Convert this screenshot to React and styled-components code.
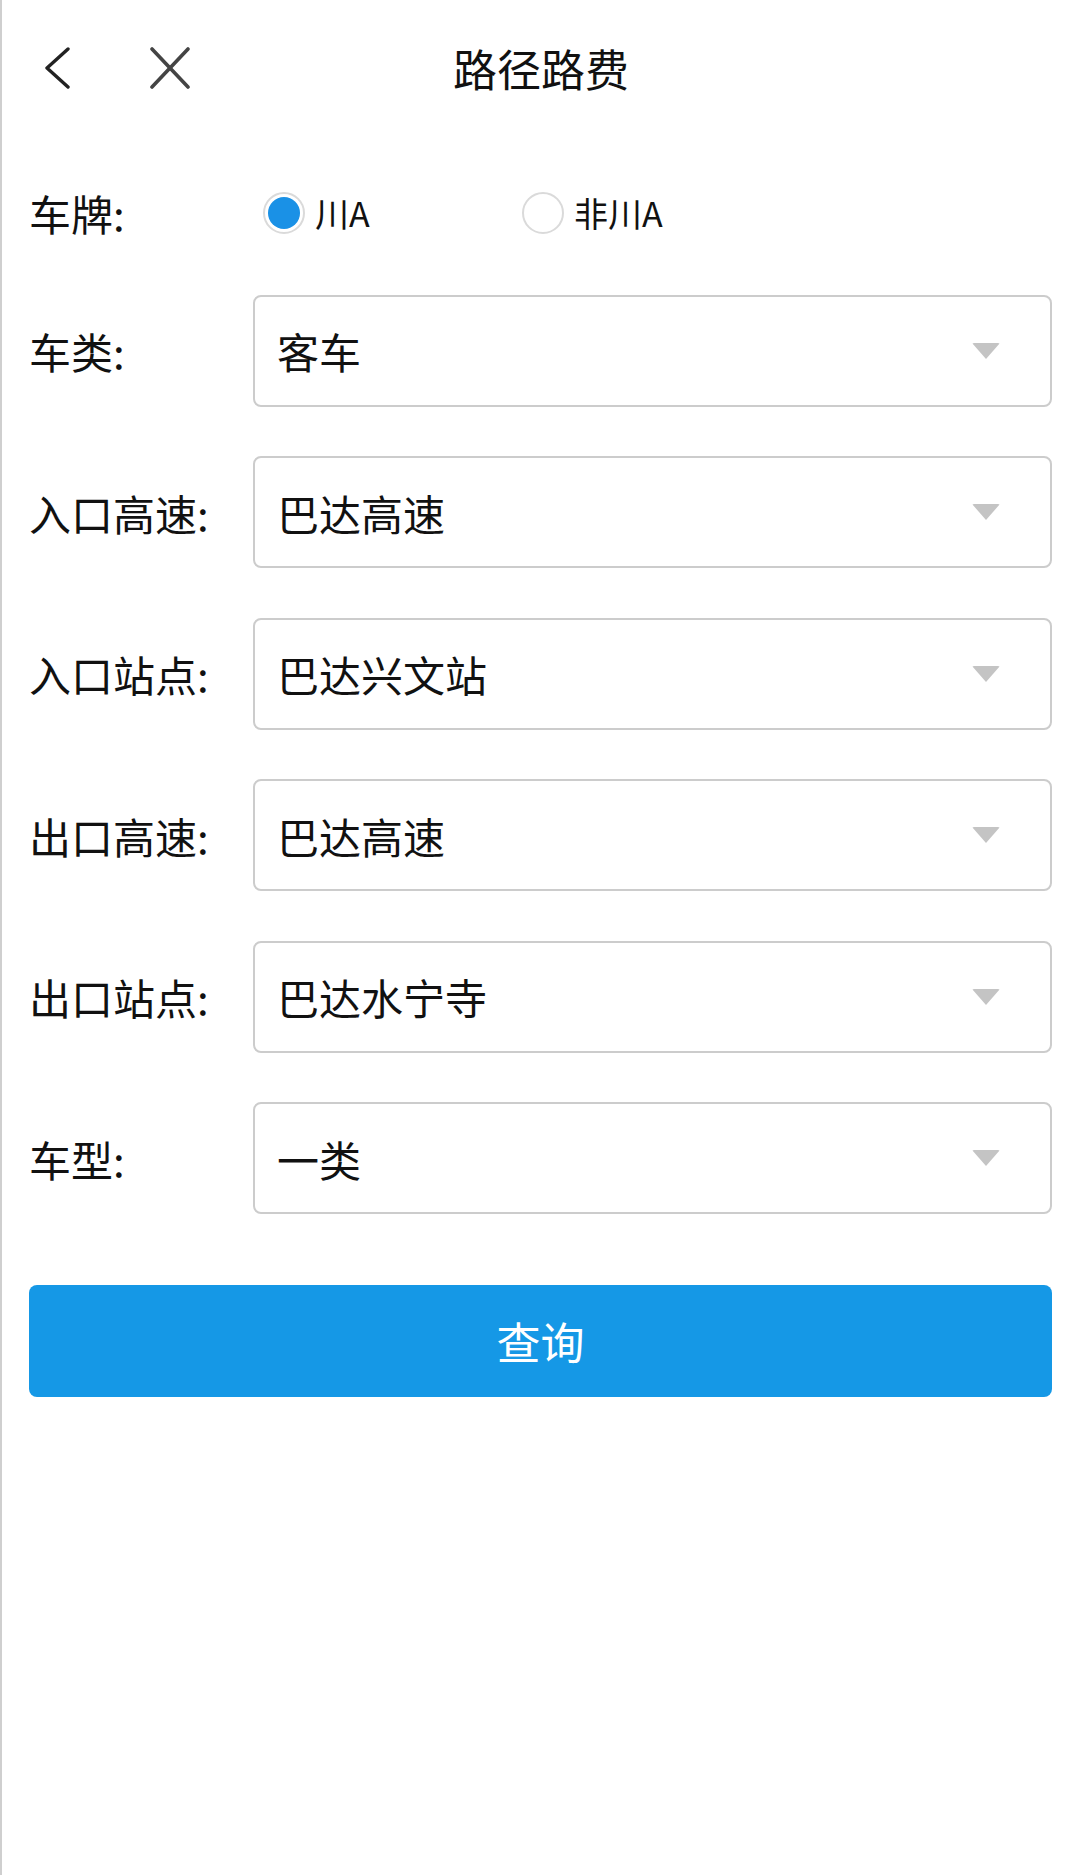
import styled, { createGlobalStyle } from "styled-components"

const GlobalStyle = createGlobalStyle`
    html, body {
        margin: 0;
        padding: 0;
        background: #ffffff;
    }
    body {
        font-family: "Noto Sans CJK SC", "Noto Sans", sans-serif;
        color: #111111;
    }
`

const Page = styled.div`
    min-height: 1875px;
    box-sizing: border-box;
    border-left: 2px solid #cfcfcf;
    background: #ffffff;
`

const Header = styled.div`
    display: grid;
    grid-template-columns: 1fr auto 1fr;
    align-items: center;
    height: 136px;
`

const HeaderIcons = styled.div`
    display: flex;
    align-items: center;
    gap: 78px;
    padding-left: 41px;
`

const IconButton = styled.button`
    display: flex;
    align-items: center;
    justify-content: center;
    padding: 0;
    border: none;
    background: none;
`

const Title = styled.h1`
    margin: 0;
    font-size: 44px;
    font-weight: 400;
    color: #111111;
`

const Form = styled.div`
    display: flex;
    flex-direction: column;
    gap: 49.5px;
    padding: 46px 28px 0 27px;
`

const Row = styled.div`
    display: grid;
    grid-template-columns: 224px 1fr;
    align-items: center;
    height: ${(p) => p.height || 112}px;
    margin-bottom: ${(p) => p.shift || 0}px;
`

const Label = styled.div`
    font-size: 42px;
    color: #111111;
    white-space: nowrap;
`

const RadioGroup = styled.div`
    display: flex;
    align-items: center;
    padding-left: 10px;
`

const RadioOption = styled.label`
    display: flex;
    align-items: center;
    gap: 10px;
    width: ${(p) => p.width || "auto"};
    font-size: 34px;
    color: #111111;
`

const RadioDot = styled.span`
    width: 42px;
    height: 42px;
    box-sizing: border-box;
    border-radius: 50%;
    border: 2px solid #dadada;
    padding: 3px;
    background: ${(p) => (p.checked ? "#1a91e6" : "#ffffff")};
    background-clip: content-box;
`

const Select = styled.div`
    display: flex;
    align-items: center;
    justify-content: space-between;
    height: 112px;
    box-sizing: border-box;
    border: 2px solid #cccccc;
    border-radius: 8px;
    padding: 0 50px 0 22px;
    font-size: 42px;
    color: #111111;
`

const Arrow = styled.span`
    width: 0;
    height: 0;
    border-left: 14px solid transparent;
    border-right: 14px solid transparent;
    border-top: 16px solid #c4c4c4;
    border-radius: 2px;
`

const SubmitButton = styled.button`
    display: block;
    margin: 71px 28px 0 27px;
    width: calc(100% - 55px);
    height: 112px;
    border: none;
    border-radius: 8px;
    background: #1598e6;
    color: #ffffff;
    font-family: "Noto Sans CJK SC", "Noto Sans", sans-serif;
    font-size: 44px;
`

const fields = [
    { label: "车类:", value: "客车" },
    { label: "入口高速:", value: "巴达高速" },
    { label: "入口站点:", value: "巴达兴文站" },
    { label: "出口高速:", value: "巴达高速" },
    { label: "出口站点:", value: "巴达水宁寺" },
    { label: "车型:", value: "一类" },
]

const App = () => {
    return (
        <Page>
            <GlobalStyle />
            <Header>
                <HeaderIcons>
                    <IconButton>
                        <svg width="28" height="42" viewBox="0 0 28 42">
                            <polyline points="25,2 4,21 25,40" fill="none" stroke="#222" strokeWidth="3.4" strokeLinecap="round" strokeLinejoin="round" />
                        </svg>
                    </IconButton>
                    <IconButton>
                        <svg width="42" height="42" viewBox="0 0 42 42">
                            <line x1="3" y1="2" x2="39" y2="40" stroke="#444" strokeWidth="3.6" strokeLinecap="round" />
                            <line x1="39" y1="2" x2="3" y2="40" stroke="#444" strokeWidth="3.6" strokeLinecap="round" />
                        </svg>
                    </IconButton>
                </HeaderIcons>
                <Title>路径路费</Title>
                <div />
            </Header>
            <Form>
                <Row height={58} shift={5}>
                    <Label>车牌:</Label>
                    <RadioGroup>
                        <RadioOption width="259px">
                            <RadioDot checked />
                            川A
                        </RadioOption>
                        <RadioOption>
                            <RadioDot />
                            非川A
                        </RadioOption>
                    </RadioGroup>
                </Row>
                {fields.map((f) => (
                    <Row key={f.label}>
                        <Label>{f.label}</Label>
                        <Select>
                            {f.value}
                            <Arrow />
                        </Select>
                    </Row>
                ))}
            </Form>
            <SubmitButton>查询</SubmitButton>
        </Page>
    )
}

export default App
